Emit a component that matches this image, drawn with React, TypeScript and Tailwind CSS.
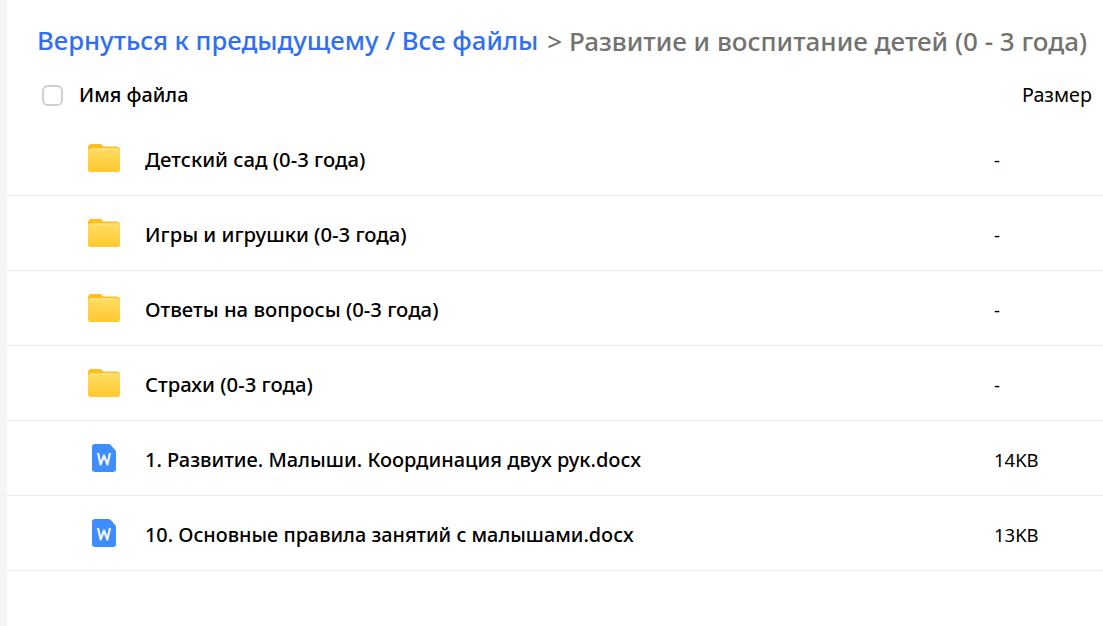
const rows = [
  { name: "Детский сад (0-3 года)", size: "-", folder: true, cls: "text-[20.3px]" },
  { name: "Игры и игрушки (0-3 года)", size: "-", folder: true, cls: "text-[20.3px]" },
  { name: "Ответы на вопросы (0-3 года)", size: "-", folder: true, cls: "text-[20.3px]" },
  { name: "Страхи (0-3 года)", size: "-", folder: true, cls: "text-[20.3px]" },
  { name: "1. Развитие. Малыши. Координация двух рук.docx", size: "14KB", folder: false, cls: "text-[20px]" },
  { name: "10. Основные правила занятий с малышами.docx", size: "13KB", folder: false, cls: "text-[19.83px]" },
];

function FolderIcon() {
  return (
    <svg width="32" height="28" viewBox="0 0 32 28" className="block">
      <defs>
        <linearGradient id="folderBody" x1="0" y1="0" x2="0" y2="1">
          <stop offset="0" stopColor="#ffdc62" />
          <stop offset="1" stopColor="#ffc82e" />
        </linearGradient>
      </defs>
      <path d="M0 3.5C0 1.3 1.3 0 3.5 0h8c1.2 0 2 .5 2.8 1.4l.9 1.1H28.5c2 0 3.5 1.3 3.5 3.5V11H0z" fill="#ffbd1f" />
      <rect x="0" y="4.5" width="32" height="23.5" rx="2.5" fill="url(#folderBody)" />
      <rect x="2.5" y="4.5" width="27" height="1" fill="#ffeaa0" />
    </svg>
  );
}

function DocIcon() {
  return (
    <svg width="24" height="28" viewBox="0 0 24 28" className="block">
      <path d="M3 0h13.5c.8 0 1.5.3 2 .8l4.7 5.2c.5.5.8 1.2.8 2V25a3 3 0 0 1-3 3H3a3 3 0 0 1-3-3V3a3 3 0 0 1 3-3z" fill="#3f8cff" />
      <path d="M6 9l2.6 11.5 3.4-9 3.4 9L18 9" fill="none" stroke="#ffffff" strokeWidth="2.2" strokeLinejoin="round" strokeOpacity="0.9" />
    </svg>
  );
}

export default function App() {
  return (
    <div className="h-[626px] w-[1103px] overflow-hidden bg-white pl-[7px] font-['Noto_Sans','Open_Sans',sans-serif] text-black">
      <div className="fixed inset-y-0 left-0 w-[7px] bg-[#f5f5f5]" />
      <div className="flex h-[85px] items-center whitespace-nowrap pb-[2px] pl-[30px] font-medium">
        <span className="text-[25.7px] text-[#2f6ff5]">Вернуться к предыдущему / Все файлы</span>
        <span className="ml-[9px] text-[26px] text-[#73726f]">&gt; Развитие и воспитание детей (0 - 3 года)</span>
      </div>
      <div className="flex h-[20px] items-center">
        <div className="ml-[35px] h-[21px] w-[21px] rounded-[6px] border-[2.5px] border-[#d0d0d0]" />
        <div className="ml-[16px] flex-1 text-[19.8px] font-medium">Имя файла</div>
        <div className="w-[81px] text-[19.7px]">Размер</div>
      </div>
      <div className="mt-[16px]">
        {rows.map((r) => (
          <div key={r.name} className="flex h-[75px] items-center border-b border-[#ececec]">
            <div className="ml-[81px] flex w-[57px] justify-start">
              {r.folder ? <FolderIcon /> : <div className="ml-[4px]"><DocIcon /></div>}
            </div>
            <div className={"flex-1 pt-[3px] font-medium " + r.cls}>{r.name}</div>
            <div className="w-[109px] pt-[3px] text-[18.5px]">{r.size}</div>
          </div>
        ))}
      </div>
    </div>
  );
}
